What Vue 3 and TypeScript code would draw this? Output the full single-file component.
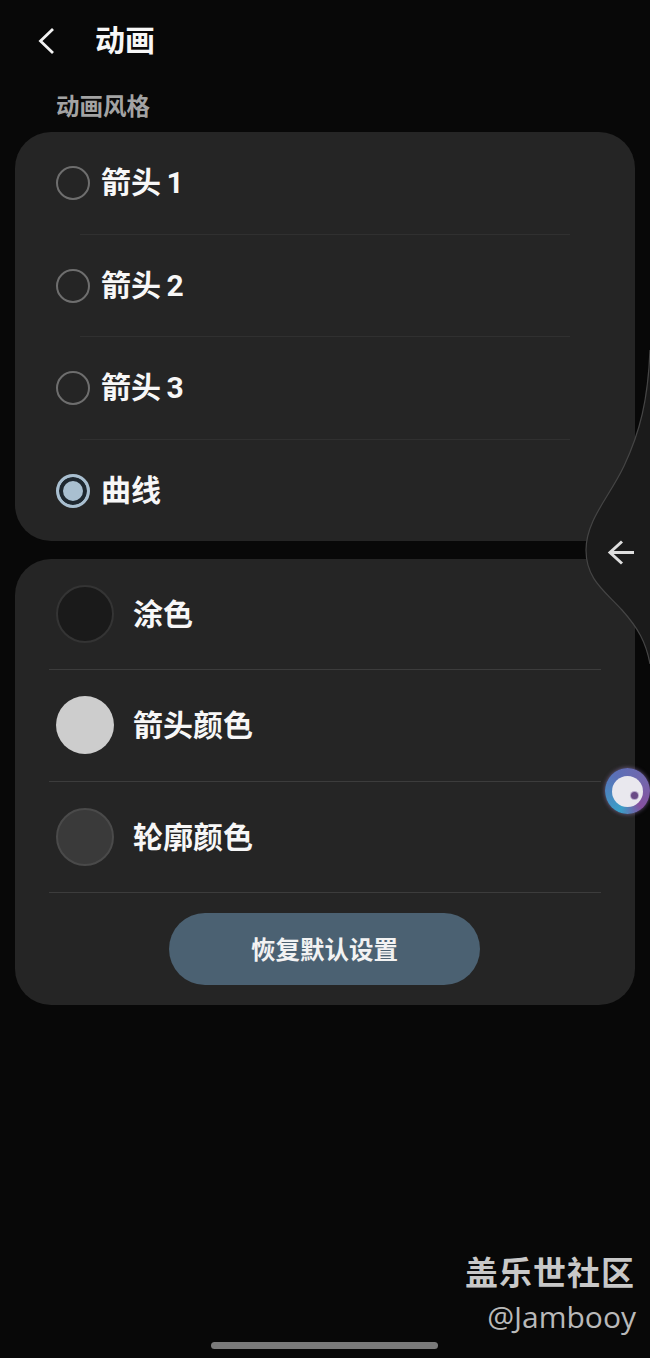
<template>
  <div class="screen">
    <header class="top-bar">
      <svg class="back" width="20" height="30" viewBox="0 0 20 30">
        <path d="M16 3 L3.5 15 L16 27" fill="none" stroke="#f2f2f2" stroke-width="2.8" />
      </svg>
      <h1>动画</h1>
    </header>
    <p class="section-title">动画风格</p>

    <section class="card styles">
      <div v-for="(item, i) in styles" :key="item" class="style-row" :class="{ last: i === styles.length - 1 }">
        <span class="radio" :class="{ on: item === selected }"></span>
        <span class="label">{{ item }}</span>
      </div>
    </section>

    <section class="card colors">
      <div v-for="c in colors" :key="c.name" class="color-row">
        <span class="swatch" :class="c.cls"></span>
        <span class="label">{{ c.name }}</span>
      </div>
      <div class="actions">
        <button type="button" class="reset">恢复默认设置</button>
      </div>
    </section>

    <!-- edge panel handle -->
    <svg class="edge" width="66" height="320" viewBox="584 346 66 320">
      <path
        d="M650 350 C648 400 640 432 624 466 C610 496 586 520 586 550 C586 580 606 592 622 610 C638 628 646 642 650 664 Z"
        fill="#1b1b1b"
      />
      <path
        d="M650 350 C648 400 640 432 624 466 C610 496 586 520 586 550 C586 580 606 592 622 610 C638 628 646 642 650 664"
        fill="none"
        stroke="#454545"
        stroke-width="1.2"
      />
      <path d="M610 552.5 H634 M622 541.5 L610 552.5 L622 563.5" fill="none" stroke="#dedede" stroke-width="3" />
    </svg>

    <div class="float-ball">
      <span class="ball-inner"><span class="ball-dot"></span></span>
    </div>

    <div class="watermark">
      <div class="wm-title">盖乐世社区</div>
      <div class="wm-user">@Jambooy</div>
    </div>
    <div class="home-bar"></div>
  </div>
</template>

<script setup lang="ts">
const styles = ['箭头 1', '箭头 2', '箭头 3', '曲线']
const selected = '曲线'

const colors = [
  { name: '涂色', cls: 'dark' },
  { name: '箭头颜色', cls: 'light' },
  { name: '轮廓颜色', cls: 'mid' }
]
</script>

<style>
html,
body {
  background: #080808;
}
</style>

<style scoped>
.screen {
  position: relative;
  width: 650px;
  height: 1358px;
  overflow: hidden;
  background: #080808;
  font-family: Roboto, "Noto Sans CJK SC", sans-serif;
  color: #f7f7f7;
}

.top-bar {
  display: flex;
  align-items: center;
  height: 82px;
  padding-left: 37px;
}

.back {
  margin-right: 38px;
}

.top-bar h1 {
  margin: 0;
  font-size: 30px;
  font-weight: 700;
  line-height: 1;
}

.section-title {
  margin: 0;
  height: 50px;
  padding-left: 56px;
  font-size: 23.5px;
  line-height: 50px;
  font-weight: 700;
  color: #a3a3a3;
}

.card {
  width: 620px;
  margin-left: 15px;
  background: #252525;
  border-radius: 36px;
}

.styles {
  height: 409px;
  margin-bottom: 18px;
}

.style-row {
  position: relative;
  display: flex;
  align-items: center;
  height: 102.5px;
  padding-left: 41px;
}

.style-row .label {
  margin-top: 0;
}

.style-row:not(.last)::after {
  content: "";
  position: absolute;
  left: 65px;
  right: 65px;
  bottom: 0;
  height: 1px;
  background: #303030;
}

.radio {
  box-sizing: border-box;
  display: block;
  width: 34px;
  height: 34px;
  margin-right: 11px;
  border: 2.5px solid #6e6e6e;
  border-radius: 50%;
}

.radio.on {
  border: 3.5px solid #a9bfd0;
  background: #a9bfd0;
  box-shadow: inset 0 0 0 4px #1f2830;
}

.label {
  margin-top: 2px;
  font-size: 30px;
  font-weight: 700;
  line-height: 1;
  word-spacing: -2px;
}

.colors {
  height: 446px;
  padding: 0 34px;
  box-sizing: border-box;
}

.color-row {
  display: flex;
  align-items: center;
  height: 111.3px;
  padding-left: 7px;
  border-bottom: 1px solid #3c3c3c;
  box-sizing: border-box;
}

.swatch {
  box-sizing: border-box;
  width: 58px;
  height: 58px;
  margin-right: 19px;
  border-radius: 50%;
}

.swatch.dark {
  background: #1a1a1a;
  border: 2px solid #343434;
}

.swatch.light {
  background: #cdcdcd;
}

.swatch.mid {
  background: #3a3a3a;
  border: 2px solid #4a4a4a;
}

.actions {
  display: flex;
  justify-content: center;
  padding-top: 20px;
}

.reset {
  width: 311px;
  height: 72px;
  margin-right: 1px;
  padding: 0;
  border: none;
  border-radius: 36px;
  background: #4b6172;
  color: #f2f2f2;
  font-family: inherit;
  font-size: 24.5px;
  font-weight: 700;
}

.edge {
  position: absolute;
  left: 584px;
  top: 346px;
}

.float-ball {
  position: absolute;
  left: 605px;
  top: 768px;
  width: 45px;
  height: 46px;
  border-radius: 50%;
  display: flex;
  align-items: center;
  justify-content: center;
  background: conic-gradient(from 200deg, #3a9fc8, #5a70b8 120deg, #7466ac 220deg, #85509f 300deg, #3a9fc8);
  box-shadow: 0 0 4px rgba(170, 140, 210, 0.6);
}

.ball-inner {
  position: relative;
  display: block;
  width: 31px;
  height: 31px;
  border-radius: 50%;
  background: #e9e8ee;
}

.ball-dot {
  position: absolute;
  right: 5px;
  bottom: 8px;
  width: 7px;
  height: 7px;
  border-radius: 50%;
  background: #6a4c86;
  box-shadow: 0 0 0 1px #b5a8c8;
}

.watermark {
  position: absolute;
  right: 14px;
  top: 1254px;
  text-align: right;
}

.wm-title {
  font-size: 33px;
  line-height: 40px;
  font-weight: 700;
  letter-spacing: 1px;
  color: #c8c8c8;
  margin-right: 1px;
}

.wm-user {
  margin-top: 5px;
  font-family: "Open Sans", sans-serif;
  font-size: 30px;
  line-height: 36px;
  color: #b9b9b9;
}

.home-bar {
  position: absolute;
  left: 211px;
  top: 1342px;
  width: 227px;
  height: 7px;
  border-radius: 4px;
  background: #7a7a7a;
}
</style>
